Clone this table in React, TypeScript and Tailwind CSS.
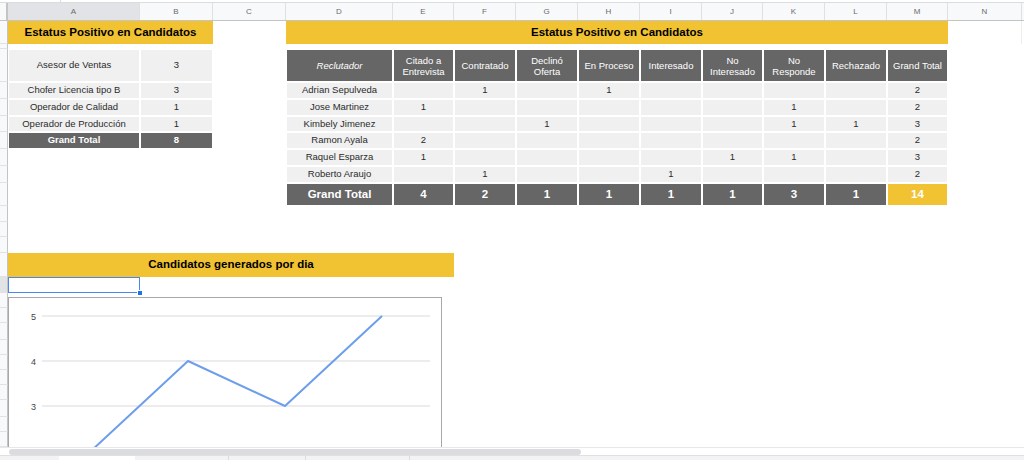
import React from "react";

const COLS: { k: string; w: string }[] = [
  { k: "A", w: "w-[132px]" },
  { k: "B", w: "w-[73px]" },
  { k: "C", w: "w-[73px]" },
  { k: "D", w: "w-[107px]" },
  { k: "E", w: "w-[61px]" },
  { k: "F", w: "w-[62px]" },
  { k: "G", w: "w-[62px]" },
  { k: "H", w: "w-[62px]" },
  { k: "I", w: "w-[62px]" },
  { k: "J", w: "w-[61px]" },
  { k: "K", w: "w-[62px]" },
  { k: "L", w: "w-[62px]" },
  { k: "M", w: "w-[61px]" },
  { k: "N", w: "w-[74px]" },
];

const RW = ["w-[61px]", "w-[62px]", "w-[62px]", "w-[62px]", "w-[62px]", "w-[61px]", "w-[62px]", "w-[62px]", "w-[61px]"];

const HEADERS: React.ReactNode[] = [
  <>Citado a<br />Entrevista</>,
  "Contratado",
  <>Declinó<br />Oferta</>,
  "En Proceso",
  "Interesado",
  <>No<br />Interesado</>,
  <>No<br />Responde</>,
  "Rechazado",
  "Grand Total",
];

const DATA: { n: string; v: (string | number)[] }[] = [
  { n: "Adrian Sepulveda", v: ["", 1, "", 1, "", "", "", "", 2] },
  { n: "Jose Martinez", v: [1, "", "", "", "", "", 1, "", 2] },
  { n: "Kimbely Jimenez", v: ["", "", 1, "", "", "", 1, 1, 3] },
  { n: "Ramon Ayala", v: [2, "", "", "", "", "", "", "", 2] },
  { n: "Raquel Esparza", v: [1, "", "", "", "", 1, 1, "", 3] },
  { n: "Roberto Araujo", v: ["", 1, "", "", 1, "", "", "", 2] },
];

const TOTALS = [4, 2, 1, 1, 1, 1, 3, 1];

const LEFT = [
  { n: "Chofer Licencia tipo B", v: 3 },
  { n: "Operador de Calidad", v: 1 },
  { n: "Operador de Producción", v: 1 },
];

function Gutter({ sel }: { sel?: boolean }) {
  return (
    <div
      className={`w-[8px] shrink-0 border-r border-b border-r-[#c4c4c4] border-b-[#e2e2e2] ${
        sel ? "bg-[#e1e3e6]" : "bg-[#f8f9fa]"
      }`}
    />
  );
}

function Cell({
  w,
  bg = "",
  cls = "",
  children,
}: {
  w: string;
  bg?: string;
  cls?: string;
  children?: React.ReactNode;
}) {
  return (
    <div className={`${w} shrink-0 p-px`}>
      <div className={`h-full flex items-center justify-center text-center ${bg} ${cls}`}>{children}</div>
    </div>
  );
}

function Blank({ w }: { w: string }) {
  return <div className={`${w} shrink-0`} />;
}

const LIGHT = "bg-[#f0f0f0] text-[9.5px] text-[#2b2b2b]";
const DARK = "bg-[#666666] text-[9.5px] text-white leading-[11px]";

function RightRow({ d }: { d: { n: string; v: (string | number)[] } }) {
  return (
    <>
      <Cell w="w-[107px]" bg={LIGHT}>{d.n}</Cell>
      {d.v.map((x, i) => (
        <Cell key={i} w={RW[i]} bg={LIGHT}>
          {x}
        </Cell>
      ))}
    </>
  );
}

function Chart() {
  const pts = [
    [82, 153],
    [179, 63],
    [276, 108],
    [373, 18],
  ];
  return (
    <div className="absolute left-[8px] top-[276px] w-[434px] h-[200px] border border-[#a8a8a8] bg-white">
      <svg width="432" height="198" viewBox="0 0 432 198">
        {[
          [18, "5"],
          [63, "4"],
          [108, "3"],
          [153, "2"],
        ].map(([y, l]) => (
          <g key={l as string}>
            <line x1="33" x2="421" y1={y as number} y2={y as number} stroke="#e6e6e6" strokeWidth="1.6" />
            <text
              x="27"
              y={(y as number) + 3.5}
              textAnchor="end"
              fontSize="9"
              fill="#444"
              fontFamily="'Liberation Sans', Arial, sans-serif"
            >
              {l}
            </text>
          </g>
        ))}
        <polyline
          points={pts.map((p) => p.join(",")).join(" ")}
          fill="none"
          stroke="#6d9eeb"
          strokeWidth="2"
          strokeLinejoin="round"
        />
      </svg>
    </div>
  );
}

export default function App() {
  const lowerRows = ["h-[15px]", "h-[15px]", "h-[17px]", "h-[15px]", "h-[15px]", "h-[15px]", "h-[15px]", "h-[17px]", "h-[15px]", "h-[15px]", "h-[15px]"];
  return (
    <div className="w-[1024px] h-[460px] overflow-hidden bg-white flex flex-col font-['Liberation_Sans',Arial,sans-serif] text-[#222]">
      {/* top strip */}
      <div className="h-[3px] shrink-0 bg-white border-b border-[#dadce0] flex">
        <div className="w-[60px]" />
        <div className="w-px h-full bg-[#dadce0]" />
      </div>
      {/* column header */}
      <div className="h-[18px] shrink-0 flex bg-[#f8f9fa] border-b border-[#c4c4c4]">
        <div className="w-[8px] shrink-0 border-r-2 border-[#c4c4c4]" />
        {COLS.map((c) => (
          <div
            key={c.k}
            className={`${c.w} shrink-0 border-r border-[#e0e0e0] flex items-center justify-center text-[8px] text-[#6b6b6b] ${
              c.k === "A" ? "bg-[#e1e3e6]" : ""
            }`}
          >
            {c.k}
          </div>
        ))}
        <div className="flex-1" />
      </div>

      {/* grid */}
      <div className="flex-1 relative overflow-hidden">
        {/* row 1 */}
        <div className="flex h-[23px]">
          <Gutter />
          <div className="w-[205px] shrink-0 bg-[#f1c232] flex items-center justify-center text-[11.5px] font-bold text-black">
            Estatus Positivo en Candidatos
          </div>
          <Blank w="w-[73px]" />
          <div className="w-[662px] shrink-0 bg-[#f1c232] flex items-center justify-center text-[11.5px] font-bold text-black">
            Estatus Positivo en Candidatos
          </div>
          <div className="w-[74px] shrink-0 border-r border-[#eeeeee]" />
        </div>
        {/* row 2 */}
        <div className="flex h-[5px]">
          <Gutter />
        </div>
        {/* row 3 */}
        <div className="flex h-[33px]">
          <Gutter />
          <Cell w="w-[132px]" bg={LIGHT}>Asesor de Ventas</Cell>
          <Cell w="w-[73px]" bg={LIGHT}>3</Cell>
          <Blank w="w-[73px]" />
          <Cell w="w-[107px]" bg={DARK} cls="italic">Reclutador</Cell>
          {HEADERS.map((h, i) => (
            <Cell key={i} w={RW[i]} bg={DARK}>
              {h}
            </Cell>
          ))}
        </div>
        {/* rows 4-9 */}
        {DATA.map((d, i) => (
          <div key={d.n} className={`flex ${i === 2 ? "h-[16px]" : "h-[17px]"}`}>
            <Gutter />
            {i < 3 ? (
              <>
                <Cell w="w-[132px]" bg={LIGHT}>{LEFT[i].n}</Cell>
                <Cell w="w-[73px]" bg={LIGHT}>{LEFT[i].v}</Cell>
              </>
            ) : i === 3 ? (
              <>
                <Cell w="w-[132px]" bg="bg-[#666666] text-[9.5px] font-bold text-white">Grand Total</Cell>
                <Cell w="w-[73px]" bg="bg-[#666666] text-[9.5px] font-bold text-white">8</Cell>
              </>
            ) : (
              <Blank w="w-[205px]" />
            )}
            <Blank w="w-[73px]" />
            <RightRow d={d} />
          </div>
        ))}
        {/* row 10 */}
        <div className="flex h-[23px]">
          <Gutter />
          <Blank w="w-[278px]" />
          <Cell w="w-[107px]" bg="bg-[#666666] text-[11.5px] font-bold text-white">Grand Total</Cell>
          {TOTALS.map((t, i) => (
            <Cell key={i} w={RW[i]} bg="bg-[#666666] text-[11.5px] font-bold text-white">
              {t}
            </Cell>
          ))}
          <Cell w="w-[61px]" bg="bg-[#f1c232] text-[11.5px] font-bold text-white">14</Cell>
        </div>
        {/* rows 11-13 */}
        <div className="flex h-[16px]"><Gutter /></div>
        <div className="flex h-[15px]"><Gutter /></div>
        <div className="flex h-[16px]"><Gutter /></div>
        {/* row 14 */}
        <div className="flex h-[24px]">
          <Gutter />
          <div className="w-[446px] shrink-0 bg-[#f1c232] flex items-center justify-center text-[11.5px] font-bold text-black">
            Candidatos generados por dia
          </div>
        </div>
        {/* row 15 selected */}
        <div className="flex h-[16px]">
          <Gutter sel />
          <div className="w-[132px] shrink-0 relative border border-[#4a86f0]">
            <div className="absolute right-[-4px] bottom-[-4px] w-[6px] h-[6px] bg-[#1a73e8] border border-white" />
          </div>
        </div>
        {lowerRows.map((h, i) => (
          <div key={i} className={`flex ${h}`}>
            <Gutter />
          </div>
        ))}
        <Chart />
      </div>

      {/* scrollbar */}
      <div className="h-[8px] shrink-0 bg-white border-t border-[#e8e8e8] flex items-center pl-[9px]">
        <div className="w-[572px] h-[6px] rounded-full bg-[#dadce0]" />
      </div>
      {/* tabs */}
      <div className="h-[5px] shrink-0 bg-[#f1f3f4] border-t border-[#e0e0e0] flex">
        <div className="w-[59px]" />
        <div className="w-[76px] bg-white" />
        <div className="w-[94px] border-r border-[#dadce0]" />
        <div className="w-[77px] border-r border-[#dadce0]" />
        <div className="w-[104px] border-r border-[#dadce0]" />
      </div>
    </div>
  );
}
